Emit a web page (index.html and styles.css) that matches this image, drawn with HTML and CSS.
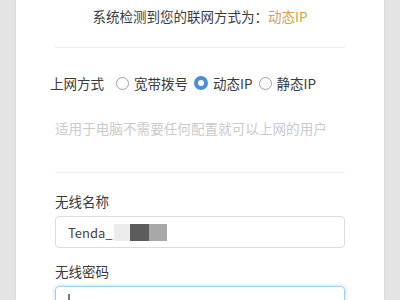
FILE: index.html
```html
<!DOCTYPE html>
<html lang="zh-CN">
<head>
<meta charset="utf-8">
<link rel="stylesheet" href="styles.css">
</head>
<body>
<div class="page">
  <div class="card">
    <div class="detect">系统检测到您的联网方式为：<span class="hl">动态IP</span></div>
    <div class="section">
      <div class="radio-row">
        <span class="row-label">上网方式</span>
        <span class="opt"><span class="radio"></span>宽带拨号</span>
        <span class="opt"><span class="radio on"></span>动态IP</span>
        <span class="opt"><span class="radio"></span>静态IP</span>
      </div>
      <div class="hint">适用于电脑不需要任何配置就可以上网的用户</div>
    </div>
    <div class="field-label first">无线名称</div>
    <div class="input"><span class="val">Tenda_</span><span class="mask m1"></span><span class="mask m2"></span><span class="mask m3"></span></div>
    <div class="field-label">无线密码</div>
    <div class="input focus"><span class="caret"></span></div>
  </div>
</div>
</body>
</html>
```
FILE: styles.css
```css
html, body {
  margin: 0;
  padding: 0;
}
body {
  background: #e4e4e4;
  font-family: "Noto Sans CJK SC", "Noto Sans", sans-serif;
  color: #3a3a3a;
  overflow: hidden;
}
.page {
  width: 400px;
  height: 300px;
  display: flex;
  justify-content: center;
  overflow: hidden;
}
.card {
  width: 368px;
  height: 300px;
  background: #fff;
  box-shadow: 0 0 2px rgba(0,0,0,0.12);
  padding: 0 39px;
  box-sizing: border-box;
  overflow: hidden;
}
.detect {
  font-size: 13.5px;
  line-height: 20px;
  text-align: center;
  padding: 6px 0 21px;
  border-bottom: 1px solid #eeeeee;
  color: #3c3c3c;
}
.hl {
  color: #d5a04e;
}
.section {
  padding: 25px 0 34px;
  border-bottom: 1px solid #eeeeee;
}
.radio-row {
  display: flex;
  align-items: center;
  margin-left: -5px;
  font-size: 13.5px;
  line-height: 20px;
  height: 20px;
}
.row-label {
  margin-right: 12px;
}
.opt {
  display: flex;
  align-items: center;
  margin-right: 6px;
}
.radio {
  width: 13px;
  height: 13px;
  box-sizing: border-box;
  border: 1px solid #a0a0a0;
  border-radius: 50%;
  margin-right: 5px;
}
.radio.on {
  border: 4px solid #4a8fd8;
  width: 14px;
  height: 14px;
}
.hint {
  margin-top: 25px;
  font-size: 13.6px;
  line-height: 20px;
  color: #cacaca;
}
.field-label {
  font-size: 13.5px;
  line-height: 20px;
  margin-top: 13px;
  color: #3a3a3a;
}
.field-label.first {
  margin-top: 18px;
}
.input {
  margin-top: 5px;
  height: 32px;
  box-sizing: border-box;
  border: 1px solid #dcdcdc;
  border-radius: 4px;
  display: flex;
  align-items: center;
  padding-left: 12px;
}
.val {
  font-size: 13px;
  color: #444;
  margin-right: 1px;
}
.mask {
  display: inline-block;
  height: 17px;
}
.m1 { width: 16px; background: #ececec; }
.m2 { width: 19px; background: #5c5c5c; }
.m3 { width: 18px; background: #a8a8a8; }
.input.focus {
  border-color: #9fcfe9;
  box-shadow: 0 0 4px rgba(102, 175, 233, 0.45);
  align-items: flex-start;
}
.caret {
  margin-top: 7px;
  width: 2px;
  height: 6px;
  background: #777;
}
```
